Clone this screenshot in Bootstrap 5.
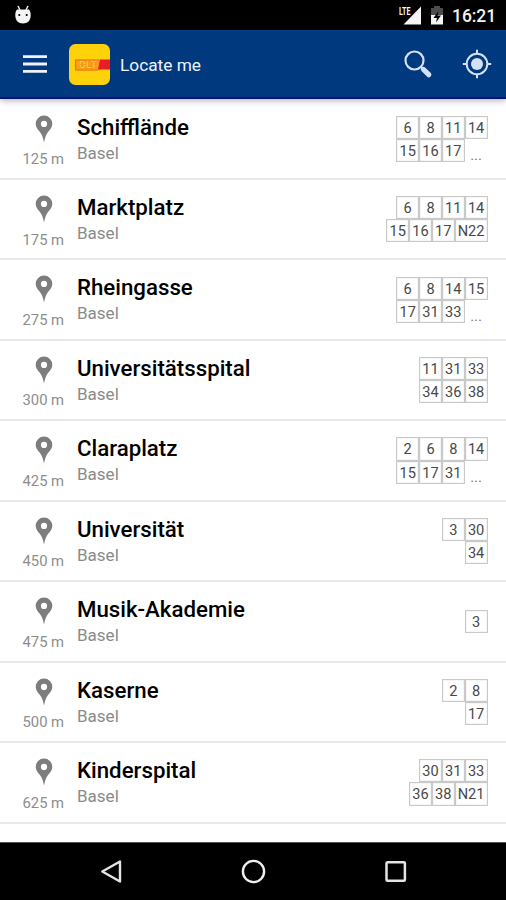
<!DOCTYPE html>
<html lang="en">
<head>
<meta charset="utf-8">
<meta name="viewport" content="width=device-width, initial-scale=1">
<title>Locate me</title>
<link href="https://cdn.jsdelivr.net/npm/bootstrap@5.3.0/dist/css/bootstrap.min.css" rel="stylesheet">
<style>
body{font-family:Roboto,"Liberation Sans",sans-serif;height:900px;background:#fff;color:#000}
svg{display:block;flex:none}
.statusbar{height:30px;background:#000;color:#f2f2f2;padding:0 10px 0 14px}
.clock{font-size:17.5px;font-weight:500;line-height:30px;padding-top:2px;letter-spacing:-.1px}
.appbar{height:69px;background:#01397f;border-bottom:2px solid #00107c;padding:0 14px 0 23px;box-shadow:0 1px 7px rgba(0,0,0,.36);z-index:2}
.app-title{font-size:17.3px;color:#eef3fb;line-height:24px;margin:3px 0 0 10px}
.stops{height:743px;padding-top:.6px}
.stop{height:80.45px;border-bottom:2px solid #e8e8e8;padding-right:18.5px;flex:none}
.dist{width:64px;padding:15px 0 0 22.500px;color:#8d8d8d;font-size:14.800px;line-height:18px;white-space:nowrap}
.dist svg{margin:0 0 7.5px 12px}
.place{padding:13px 0 0 13px}
.place-name{font-size:22.250px;font-weight:500;line-height:28px}
.place-city{font-size:17px;line-height:24px;color:#8a8a8a}
.tag{min-width:22.8px;height:23.2px;border:1px solid #c9c9c9;box-shadow:inset 0 0 0 .5px #eee;font-size:14.600px;line-height:22px;color:#484848;text-align:center;padding:0 2px}
.more{width:22.8px;height:23.2px;font-size:15px;line-height:33px;color:#777;text-align:center}
.navbtns{height:58px;background:#000;border-top:1px solid #555;padding:0 99px}
</style>
</head>
<body class="d-flex flex-column overflow-hidden">
<svg width="0" height="0" class="position-absolute"><defs>
<symbol id="pin" viewBox="0 0 18 28"><path fill="#7d7d7d" fill-rule="evenodd" d="M9 .5a8.3 8.3 0 0 0-8.3 8.3c0 4.6 3.6 6.600 5.600 10.300C7.700 21.700 8.300 24.500 9 27.500c.7-3 1.300-5.800 2.700-8.400 2-3.700 5.600-5.700 5.600-10.300A8.300 8.300 0 0 0 9 .5zm0 5.300a3.100 3.100 0 1 1 0 6.200 3.100 3.100 0 0 1 0-6.200z"/></symbol>
</defs></svg>

<header class="statusbar d-flex align-items-center justify-content-between flex-shrink-0">
  <svg width="18" height="20" viewBox="0 0 18 20"><path d="M4 1l2 4M14 1l-2 4" stroke="#eee" stroke-width="1.500"/><path d="M3 4.500h12c1.300 1.500 1.800 3.500 1.700 6-.1 5-3 8-7.700 8s-7.600-3-7.700-8c-.1-2.500.4-4.500 1.700-6z" fill="#f4f4f4"/><circle cx="5.300" cy="10" r="1.100"/><circle cx="12.700" cy="10" r="1.100"/></svg>
  <div class="d-flex align-items-center">
    <svg width="24" height="22" viewBox="0 0 24 22"><path d="M23 2.500v18H5.500z" fill="#f5f5f5"/><path d="M0 0h13.200v11.500H0z"/><text x="1" y="10.500" font-family="Roboto,sans-serif" font-size="10.500" font-weight="700" fill="#f5f5f5" textLength="11.500" lengthAdjust="spacingAndGlyphs">LTE</text></svg>
    <svg class="ms-2" width="14" height="20" viewBox="0 0 14 20"><path d="M4 1h6v2h3v7H1V3h3z" fill="#4c4c4c"/><path d="M1 10h12v9.500H1z" fill="#f5f5f5"/><path d="M8.500 6L3.500 13H7l-1 4.500 5-7H7.500z"/></svg>
    <span class="clock ms-2">16:21</span>
  </div>
</header>

<nav class="appbar d-flex align-items-center flex-shrink-0 position-relative">
  <svg width="24" height="18" viewBox="0 0 24 18"><path d="M0 1.700h24M0 9h24M0 16.300h24" stroke="#eef2ff" stroke-width="2.800"/></svg>
  <svg width="41" height="41" viewBox="0 0 41 41" style="margin:1px 0 0 22px"><rect width="41" height="41" rx="6.500" fill="#fdd20b"/><path d="M6 15.500h25v11H6z" fill="#f99c16"/><path d="M31 15.500h10v10H29z" fill="#ea1c24"/><path d="M30.500 16H6.500v10H29" fill="none" stroke="#f2741a" stroke-width="1.200"/><text x="10" y="24.300" font-family="Roboto,sans-serif" font-weight="700" font-size="9" fill="#fdd535" stroke="#ee6a1d" stroke-width=".2" textLength="18" lengthAdjust="spacingAndGlyphs">BLT</text></svg>
  <span class="app-title">Locate me</span>
  <svg class="ms-auto" width="30" height="30" viewBox="0 0 30 30"><circle cx="11.500" cy="11.500" r="9" fill="none" stroke="#d5e0f4" stroke-width="2.200"/><path d="M17.800 17.800l2.700 2.700" stroke="#d5e0f4" stroke-width="2.200"/><path d="M20.500 20.500l5.300 5.200" stroke="#d5e0f4" stroke-width="5.200" stroke-linecap="round"/></svg>
  <svg width="30" height="30" viewBox="0 0 30 30" style="margin:1px 0 0 29px"><circle cx="15" cy="15" r="10.300" fill="none" stroke="#d5e0f4" stroke-width="2"/><circle cx="15" cy="15" r="6" fill="#d5e0f4"/><path d="M15 .8v4M15 25.200v4M.8 15h4M25.200 15h4" stroke="#d5e0f4" stroke-width="2"/></svg>
</nav>

<main class="stops d-flex flex-column flex-shrink-0 overflow-hidden">
  <div class="stop d-flex"><div class="dist"><svg width="18" height="28"><use href="#pin"/></svg>125 m</div><div class="place"><div class="place-name">Schifflände</div><div class="place-city">Basel</div></div>
    <div class="ms-auto align-self-center"><div class="d-flex justify-content-end"><span class="tag">6</span><span class="tag">8</span><span class="tag">11</span><span class="tag">14</span></div><div class="d-flex justify-content-end"><span class="tag">15</span><span class="tag">16</span><span class="tag">17</span><span class="more">...</span></div></div></div>
  <div class="stop d-flex"><div class="dist"><svg width="18" height="28"><use href="#pin"/></svg>175 m</div><div class="place"><div class="place-name">Marktplatz</div><div class="place-city">Basel</div></div>
    <div class="ms-auto align-self-center"><div class="d-flex justify-content-end"><span class="tag">6</span><span class="tag">8</span><span class="tag">11</span><span class="tag">14</span></div><div class="d-flex justify-content-end"><span class="tag">15</span><span class="tag">16</span><span class="tag">17</span><span class="tag">N22</span></div></div></div>
  <div class="stop d-flex"><div class="dist"><svg width="18" height="28"><use href="#pin"/></svg>275 m</div><div class="place"><div class="place-name">Rheingasse</div><div class="place-city">Basel</div></div>
    <div class="ms-auto align-self-center"><div class="d-flex justify-content-end"><span class="tag">6</span><span class="tag">8</span><span class="tag">14</span><span class="tag">15</span></div><div class="d-flex justify-content-end"><span class="tag">17</span><span class="tag">31</span><span class="tag">33</span><span class="more">...</span></div></div></div>
  <div class="stop d-flex"><div class="dist"><svg width="18" height="28"><use href="#pin"/></svg>300 m</div><div class="place"><div class="place-name">Universitätsspital</div><div class="place-city">Basel</div></div>
    <div class="ms-auto align-self-center"><div class="d-flex justify-content-end"><span class="tag">11</span><span class="tag">31</span><span class="tag">33</span></div><div class="d-flex justify-content-end"><span class="tag">34</span><span class="tag">36</span><span class="tag">38</span></div></div></div>
  <div class="stop d-flex"><div class="dist"><svg width="18" height="28"><use href="#pin"/></svg>425 m</div><div class="place"><div class="place-name">Claraplatz</div><div class="place-city">Basel</div></div>
    <div class="ms-auto align-self-center"><div class="d-flex justify-content-end"><span class="tag">2</span><span class="tag">6</span><span class="tag">8</span><span class="tag">14</span></div><div class="d-flex justify-content-end"><span class="tag">15</span><span class="tag">17</span><span class="tag">31</span><span class="more">...</span></div></div></div>
  <div class="stop d-flex"><div class="dist"><svg width="18" height="28"><use href="#pin"/></svg>450 m</div><div class="place"><div class="place-name">Universität</div><div class="place-city">Basel</div></div>
    <div class="ms-auto align-self-center"><div class="d-flex justify-content-end"><span class="tag">3</span><span class="tag">30</span></div><div class="d-flex justify-content-end"><span class="tag">34</span></div></div></div>
  <div class="stop d-flex"><div class="dist"><svg width="18" height="28"><use href="#pin"/></svg>475 m</div><div class="place"><div class="place-name">Musik-Akademie</div><div class="place-city">Basel</div></div>
    <div class="ms-auto align-self-center"><div class="d-flex justify-content-end"><span class="tag">3</span></div></div></div>
  <div class="stop d-flex"><div class="dist"><svg width="18" height="28"><use href="#pin"/></svg>500 m</div><div class="place"><div class="place-name">Kaserne</div><div class="place-city">Basel</div></div>
    <div class="ms-auto align-self-center"><div class="d-flex justify-content-end"><span class="tag">2</span><span class="tag">8</span></div><div class="d-flex justify-content-end"><span class="tag">17</span></div></div></div>
  <div class="stop d-flex"><div class="dist"><svg width="18" height="28"><use href="#pin"/></svg>625 m</div><div class="place"><div class="place-name">Kinderspital</div><div class="place-city">Basel</div></div>
    <div class="ms-auto align-self-center"><div class="d-flex justify-content-end"><span class="tag">30</span><span class="tag">31</span><span class="tag">33</span></div><div class="d-flex justify-content-end"><span class="tag">36</span><span class="tag">38</span><span class="tag">N21</span></div></div></div>
</main>

<footer class="navbtns d-flex align-items-center justify-content-between flex-shrink-0">
  <svg width="24" height="26" viewBox="0 0 24 26"><path d="M21 2.500v20L3.300 12.500z" fill="none" stroke="#e4e4e4" stroke-width="2.400" stroke-linejoin="round"/></svg>
  <svg width="26" height="26" viewBox="0 0 26 26"><circle cx="12.500" cy="12.500" r="10.600" fill="none" stroke="#f0f0f0" stroke-width="2.400"/></svg>
  <svg width="22" height="22" viewBox="0 0 22 22"><rect x="1.500" y="1.300" width="18.400" height="18.400" rx="1" fill="none" stroke="#e4e4e4" stroke-width="2.500"/></svg>
</footer>
<script src="https://cdn.jsdelivr.net/npm/bootstrap@5.3.0/dist/js/bootstrap.bundle.min.js"></script>
</body>
</html>
